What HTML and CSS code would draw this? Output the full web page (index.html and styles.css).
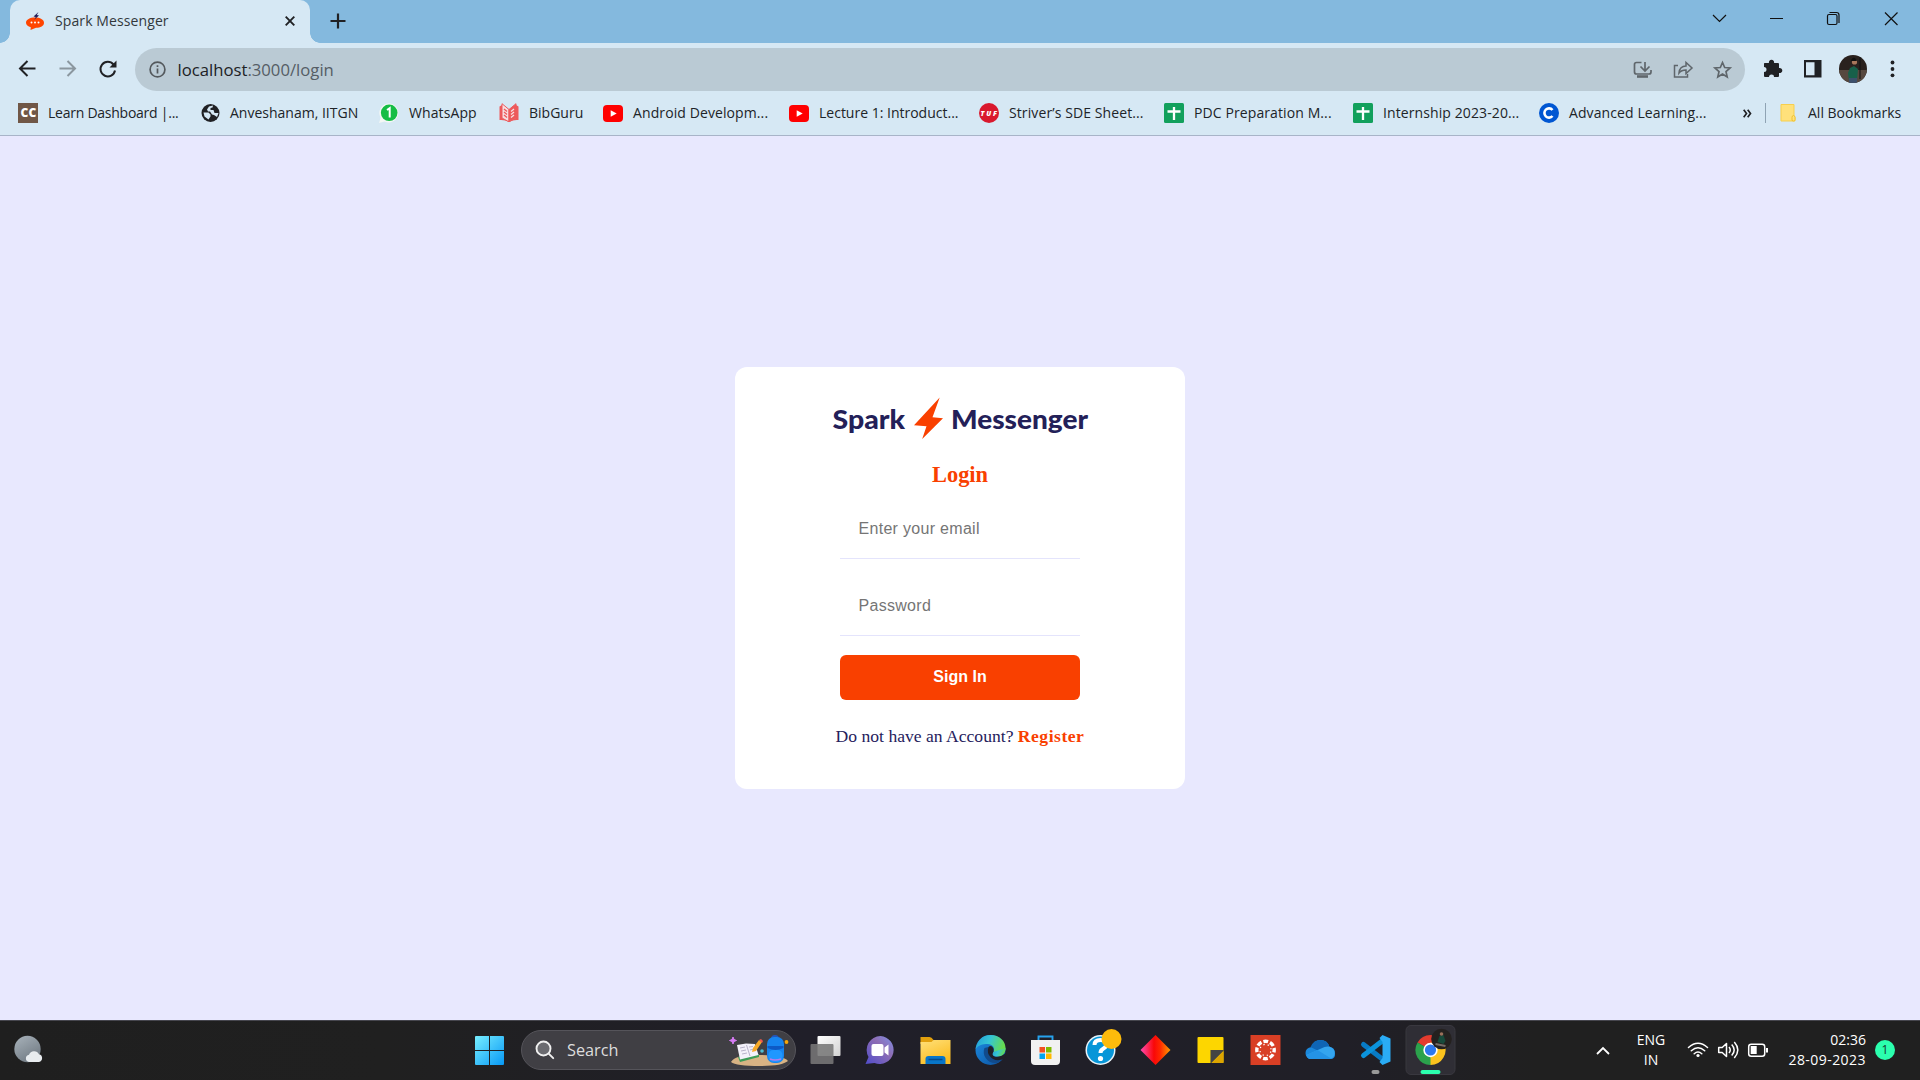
FILE: index.html
```html
<!DOCTYPE html>
<html lang="en">
<head>
<meta charset="utf-8">
<title>Spark Messenger</title>
<link rel="stylesheet" href="styles.css">
</head>
<body>
<header class="chrome">
  <div class="tabstrip">
    <div class="tab">
      <svg class="fav" width="18" height="18" viewBox="0 0 18 18"><path d="M9 5.500c5 0 9 2 9 5.200s-3.500 5-8 5.100L4.500 18l.3-2.800C2 14.500 0 12.900 0 10.700 0 7.500 4 5.500 9 5.500z" fill="#ff4500"/><path d="M12.500 0 7.500 4.400l2.300.6-1.600 2.700 4.800-4.200-2.200-.6z" fill="#25215c"/><g fill="#fff"><circle cx="5.500" cy="10.600" r="1"/><circle cx="9" cy="10.600" r="1"/><circle cx="12.500" cy="10.600" r="1"/></g></svg>
      <span class="tab-title">Spark Messenger</span>
      <svg class="tab-close" width="10" height="10" viewBox="0 0 10 10"><path d="M.7.700l8.600 8.600M9.300.700.700 9.300" stroke="#202124" stroke-width="1.900"/></svg>
    </div>
    <svg class="newtab" width="16" height="16" viewBox="0 0 16 16"><path d="M8 .5v15M.5 8h15" stroke="#202124" stroke-width="2.200"/></svg>
    <svg class="winbtns" width="220" height="43" viewBox="1700 0 220 43" fill="none" stroke="#111" stroke-width="1.200"><path d="M1713 15l6.500 6.500L1726 15M1770 18.500h13"/><rect x="1827.500" y="14.500" width="9.500" height="10" rx="1.500"/><path d="M1829.500 12.500h7q2.500 0 2.500 2.500v8"/><path d="M1885 12.500l12.500 12.500M1897.500 12.500 1885 25"/></svg>
  </div>
  <div class="toolbar">
    <svg class="nav" width="125" height="48" viewBox="0 43 125 48" fill="none" stroke="#202124" stroke-width="2"><path d="M35.500 68.500H20.500M27.500 61l-7.500 7.500 7.500 7.500"/><path d="M59.500 68.500h15M67.500 61l7.500 7.500-7.500 7.500" stroke="#8b979f"/><path d="M113.500 64.500A7.300 7.300 0 1 0 115 70.500"/><path d="M116.500 60.500v7h-7z" fill="#202124" stroke="none"/></svg>
    <div class="omnibox">
      <svg width="17" height="17" viewBox="0 0 17 17" fill="none" stroke="#54595d" stroke-width="1.700"><circle cx="8.500" cy="8.500" r="7.400"/><path d="M8.500 7.500v5M8.500 4.300v1.800"/></svg>
      <span class="url"><b>localhost</b>:3000/login</span>
      <svg class="omni-icons" width="112" height="43" viewBox="1630 48 112 43" fill="none" stroke="#5f666b" stroke-width="1.700"><path d="M1641.500 62.500h-5q-2 0-2 2v7.500q0 2 2 2h12.500q2 0 2-2v-2M1645 62v8M1640.500 66.500l4.500 4.500 4.500-4.500"/><path d="M1637 76.500h11" stroke-width="2.600"/><path d="M1678 65.500h-3.500V77h13v-3M1679 73c.5-5 3.500-7 7-7v-3.500l6 5.500-6 5.500V70c-3 0-5 .5-7 3z" stroke-width="1.500"/><path d="M1722.500 62.500l2.200 5 5.400.5-4.100 3.600 1.200 5.400-4.700-2.900-4.700 2.900 1.200-5.400-4.100-3.600 5.400-.5z"/></svg>
    </div>
    <svg class="actions" width="175" height="48" viewBox="1745 43 175 48"><path d="M1764.500 63h4.500a2.600 2.600 0 1 1 5 0h4q1 0 1 1v4a2.600 2.600 0 1 1 0 5v3q0 1-1 1h-4a2.500 2.500 0 1 0-5 0h-4q-1 0-1-1v-4a2.500 2.500 0 1 0 0-5v-3q0-1 .5-1z" fill="#202124"/><path d="M1804 60h17.500v17.500H1804zM1806 62.200v13.100h8.500V62.200z" fill="#202124" fill-rule="evenodd"/><clipPath id="av"><circle cx="1853" cy="69" r="14"/></clipPath><g clip-path="url(#av)"><path d="M1839 55h28v28h-28z" fill="#29211e"/><path d="M1839 70h28v13h-28z" fill="#56483f"/><path d="M1849 81l-1-8 2-5 4-2 4 3-1 11z" fill="#17604a"/><path d="M1849 78h8v5h-8z" fill="#3c506c"/><circle cx="1854.500" cy="62" r="2.600" fill="#a9775b"/><path d="M1851 61q1-4 4-3l2 3z" fill="#111"/><path d="M1860 57v22" stroke="#111"/></g><g fill="#202124"><circle cx="1892.500" cy="62.500" r="1.900"/><circle cx="1892.500" cy="69" r="1.900"/><circle cx="1892.500" cy="75.300" r="1.900"/></g></svg>
  </div>
  <nav class="bookmarks">
    <a class="bm w183 tight"><svg width="20" height="20" viewBox="0 0 20 20"><path d="M0 0h20v20H0z" fill="#705747"/><text x="2.500" y="13.500" class="cc" textLength="15.500">CC</text></svg><span>Learn Dashboard |...</span></a>
    <a class="bm w178"><svg width="19" height="20" viewBox="0 0 19 20"><circle cx="9.500" cy="10" r="9" fill="#202124"/><path d="M2.500 9.500h5l2 2v2l-2 3-4-3zM8 3.500l4-1-.5 2-2 .5v2h3l1 3h4l-1.500 4-3-2-2-.5-2-3H7l-1-2z" fill="#d6e8f4"/></svg><span>Anveshanam, IITGN</span></a>
    <a class="bm w120 loose"><svg width="20" height="20" viewBox="0 0 20 20"><path d="M10 .5a9.500 9.500 0 1 1-4.500 18L0 20l1.700-5.200A9.500 9.500 0 0 1 10 .5z" fill="#f4f7f5"/><circle cx="10.200" cy="9.800" r="8.300" fill="#15bd45"/><path d="M8 7l2.700-1.800v9.300" stroke="#fff" stroke-width="2" fill="none"/></svg><span>WhatsApp</span></a>
    <a class="bm w104"><svg width="20" height="20" viewBox="0 0 20 20" fill="none" stroke="#ed5a5c"><path d="M.5 3.500v13.500q5-.5 9.500 2 4.500-2.500 9.500-2V3.500L17 2v13l-7 3.500L3 15V2z" fill="#ed5a5c" stroke="none"/><path d="M3 .7v14.300l7 3.800V6.500z" fill="#f7dfe2"/><path d="M17 .7v14.300l-7 3.800V6.500z" fill="#ed5a5c"/><path d="M5 6l3 2.500M5 9l3 2.500M5 12l3 2.500" stroke-width="1.300"/><path d="M12 8.500 15 6M12 11.500 15 9M12 14.500l3-2.500" stroke="#f7dfe2" stroke-width="1.300"/></svg><span>BibGuru</span></a>
    <a class="bm w186 loose"><svg width="20" height="20" viewBox="0 0 20 20"><rect y="2" width="20" height="17" rx="4" fill="red"/><path d="M7.700 7.200v6.600l6-3.300z" fill="#fff"/></svg><span>Android Developm...</span></a>
    <a class="bm w190"><svg width="20" height="20" viewBox="0 0 20 20"><rect y="2" width="20" height="17" rx="4" fill="red"/><path d="M7.700 7.200v6.600l6-3.300z" fill="#fff"/></svg><span>Lecture 1: Introduct...</span></a>
    <a class="bm w185 loose"><svg width="20" height="20" viewBox="0 0 20 20"><circle cx="10" cy="10" r="10" fill="#d9182d"/><text x="1.500" y="12.500" class="tuf" textLength="16.500">TUF</text></svg><span>Striver’s SDE Sheet...</span></a>
    <a class="bm w189 loose"><svg width="20" height="20" viewBox="0 0 20 20"><rect width="20" height="20" rx="1.500" fill="#12a05c"/><path d="M10 4v13M3.500 8.500h13" stroke="#fff" stroke-width="2.300"/></svg><span>PDC Preparation M...</span></a>
    <a class="bm w186 loose"><svg width="20" height="20" viewBox="0 0 20 20"><rect width="20" height="20" rx="1.500" fill="#12a05c"/><path d="M10 4v13M3.500 8.500h13" stroke="#fff" stroke-width="2.300"/></svg><span>Internship 2023-20...</span></a>
    <a class="bm w203 loose"><svg width="20" height="20" viewBox="0 0 20 20"><circle cx="10" cy="10" r="10" fill="#0056d2"/><path d="M13.500 7A4.600 4.600 0 1 0 13.500 13" fill="none" stroke="#fff" stroke-width="2.600"/></svg><span>Advanced Learning...</span></a>
    <svg class="more" width="9" height="9" viewBox="0 0 9 9" fill="none" stroke="#202124" stroke-width="1.700"><path d="M.7.700 3.500 4.500.700 8.300M4.700.700 7.500 4.500 4.700 8.300"/></svg>
    <span class="sep"></span>
    <a class="bm all"><svg width="18" height="20" viewBox="0 0 18 20"><path d="M2 1.500h13v12l1 1v3.500H2z" fill="#ffe17b" stroke="#f7cf4d"/><path d="M13 17.500v-3q0-2 1.500-2t1.500 2v2q0 1.500-1.500 1.500z" fill="#ffe17b" stroke="#f0c22e"/></svg><span>All Bookmarks</span></a>
  </nav>
</header>

<main class="page">
  <section class="card">
    <svg class="logo" width="260" height="46" viewBox="830 395 260 46"><g class="logo-text"><text x="832.500" y="428.500" textLength="72.500" lengthAdjust="spacingAndGlyphs">Spark</text><text x="951" y="428.500" textLength="137" lengthAdjust="spacingAndGlyphs">Messenger</text></g><path d="M939.700 397.500 914 425.200 926.500 426.300 922.200 439 943 418.300 932.500 417.300z" fill="#f94000"/></svg>
    <h1 class="title">Login</h1>
    <form class="form">
      <input type="email" placeholder="Enter your email">
      <input type="password" placeholder="Password">
      <button type="button">Sign In</button>
    </form>
    <p class="foot">Do not have an Account? <a>Register</a></p>
  </section>
</main>

<footer class="taskbar">
  <svg class="weather" width="30" height="30" viewBox="0 0 30 30"><defs><linearGradient id="moon" x2=".6" y2="1"><stop stop-color="#a9b3bb"/><stop offset="1" stop-color="#727c85"/></linearGradient></defs><circle cx="13.500" cy="14" r="13.200" fill="url(#moon)"/><path d="M15 27a3.700 3.700 0 0 1 0-7.300 5.500 5.500 0 0 1 10-.5A4 4 0 0 1 25 27z" fill="#e8ecef"/></svg>
  <svg class="start" width="29" height="29" viewBox="0 0 29 29"><defs><linearGradient id="win" x2="1" y2="1"><stop stop-color="#77eeff"/><stop offset="1" stop-color="#0798f5"/></linearGradient></defs><path d="M1 0h13v14H0V1q0-1 1-1zM15 0h13q1 0 1 1v13H15zM0 15h14v14H1q-1 0-1-1zM15 15h14v13q0 1-1 1H15z" fill="url(#win)"/></svg>
  <div class="search">
    <svg width="20" height="20" viewBox="0 0 20 20" fill="#6b6b70" stroke="#f0f0f0" stroke-width="1.900"><circle cx="8.500" cy="8.500" r="7"/><path d="M13.700 13.700l4.500 4.500" stroke-linecap="round"/></svg>
    <span>Search</span>
    <svg class="art" width="62" height="34" viewBox="728 1034 62 34"><path d="M731 1063q4-8 30-7 22 0 27 6-6 5-28 5-24 0-29-4z" fill="#d8b384"/><path d="M733 1038l1 2.500 2.500 1-2.500 1-1 2.500-1-2.500-2.500-1 2.500-1z" fill="#d77cf5" stroke="#d77cf5"/><path d="M738 1058l2 5 19-5v-3z" fill="#3c9c56"/><path d="M737 1046l9-1.500 9 .5 3.500 11-18.500 4.500z" fill="#f3f1fa"/><path d="M740 1049l5-1M741 1052l5-1M742 1055l5-1M749 1048l4-.5M750 1051l4-1M746.500 1046l3.500 11" stroke="#aaa3be" stroke-width=".8"/><path d="M759 1041l3 2-6 9-4 1 1-4z" fill="#f7a928"/><path d="M759 1041l2-1 2 2-1 2z" fill="#f15b4e"/><circle cx="762" cy="1052" r="1.800" fill="#4fbfd2"/><circle cx="786.500" cy="1043" r="1.900" fill="#f8a705"/><path d="M772 1040q0-3 3-3t3 3" fill="none" stroke="#2257bd" stroke-width="2"/><rect x="767" y="1038" width="17" height="26" rx="7" fill="#1684ef"/><path d="M767.500 1049q8 4 16 0v-2h-16z" fill="#0d59c5"/><rect x="768.500" y="1051" width="14" height="12" rx="5" fill="#2097ff"/><path d="M770 1060q5 2 11 0" fill="none" stroke="#b57cee" stroke-width="1.600"/></svg>
  </div>
  <div class="apps">
    <svg viewBox="-27.500 -30 55 60"><defs><linearGradient id="tv" x2="1" y2="1"><stop stop-color="#fff"/><stop offset="1" stop-color="#d2d2d2"/></linearGradient></defs><rect x="-8" y="-14" width="23" height="20" rx="1" fill="url(#tv)"/><rect x="-15" y="-6" width="23" height="20" rx="1" fill="#777" opacity=".88"/></svg>
    <svg viewBox="-27.500 -30 55 60"><defs><linearGradient id="chat" x1="1" x2="0" y2="1"><stop stop-color="#7f92e8"/><stop offset=".4" stop-color="#8e6db4"/><stop offset="1" stop-color="#504ccb"/></linearGradient></defs><path d="M0-14a14 14 0 1 1-6 27l-9 1 3-7A14 14 0 0 1 0-14z" fill="url(#chat)"/><rect x="-9" y="-6" width="12" height="12" rx="2" fill="#fff"/><path d="M4-2.500l4-3v11l-4-3z" fill="#fff"/></svg>
    <svg viewBox="-27.500 -30 55 60"><defs><linearGradient id="fold" y2="1" x2=".5"><stop stop-color="#ffe07a"/><stop offset="1" stop-color="#fbbd22"/></linearGradient></defs><path d="M-15-13h9q2 0 4 3l1 4h-14z" fill="#e2a00d"/><path d="M-15-8h11l2-2h17v24h-30z" fill="url(#fold)"/><path d="M-10 14v-5q0-3 3-3H7q3 0 3 3v5z" fill="#0876c9"/><path d="M-7 9.500H7" stroke="#064b8b" stroke-width="1.500"/></svg>
    <svg viewBox="-27.500 -30 55 60"><defs><linearGradient id="ed1" x2="1" y2=".3"><stop stop-color="#229bd8"/><stop offset=".5" stop-color="#35c5d5"/><stop offset="1" stop-color="#66dc4e"/></linearGradient><linearGradient id="ed2" y2="1"><stop stop-color="#1d8ee4"/><stop offset="1" stop-color="#0b4f9d"/></linearGradient></defs><circle r="15" fill="url(#ed2)"/><path d="M-15-1C-13-10-8-15 0-15 9-15 15-9 15-2c0 5-4 8-8 8-5 0-6-2-4-4 2-4-1-8-6-8S-12-5-15-1z" fill="url(#ed1)"/><path d="M-6-2c-3 7 3 16 12 15 3-1 5-2 7-5Q7 11 3 8T-2-3z" fill="#114a8b"/><path d="M-2-3Q0-5 2-3t1 5q-2 3 1 4.500T16 3l-2 6Q4 12 0 7-4 3-2-3z" fill="#202028"/><path d="M3 2c-2 3 0 4.500 4 4.500 5 0 8-3 8-8.500z" fill="url(#ed1)"/></svg>
    <svg viewBox="-27.500 -30 55 60"><path d="M-7-8v-5.500H7V-8" fill="none" stroke="#26a2ed" stroke-width="1.900"/><path d="M-14.500-10h29V11q0 4-4 4h-21q-4 0-4-4z" fill="#f1f1f1"/><path d="M-6-3h5.500v5.500H-6z" fill="#f25022"/><path d="M.5-3H6v5.500H.500z" fill="#7fba00"/><path d="M-6 3.500h5.500V9H-6z" fill="#00a4ef"/><path d="M.5 3.500H6V9H.500z" fill="#ffb900"/></svg>
    <svg viewBox="-27.500 -30 55 60"><circle r="15" fill="#e9f4fa"/><circle r="13.500" fill="#0796d8"/><path d="M-6-5q0-5 6-5t6 4q0 3-3 4.500T0 3" fill="none" stroke="#fff" stroke-width="4"/><circle cy="8.500" r="2.600" fill="#fff"/><circle cx="11" cy="-11" r="10" fill="#fdbb0b"/></svg>
    <svg viewBox="-27.500 -30 55 60"><defs><linearGradient id="dia"><stop stop-color="#ff4cb5"/><stop offset=".45" stop-color="#f90808"/><stop offset=".65" stop-color="#ff2600"/><stop offset="1" stop-color="#ff9e00"/></linearGradient></defs><path d="M0-15 15 0 0 15-15 0z" fill="url(#dia)"/></svg>
    <svg viewBox="-27.500 -30 55 60"><rect x="-13" y="-13" width="26" height="26" rx="1" fill="#fdd600"/><path d="M0 0h13v1L1 13H0z" fill="#444"/><path d="M13 1v12H1z" fill="#dda500"/></svg>
    <svg viewBox="-27.500 -30 55 60"><path d="M-15-15h30v30h-30z" fill="#d93f25"/><circle r="8.700" fill="none" stroke="#fff" stroke-width="3.400" stroke-dasharray="4.800 2.033" stroke-dashoffset="2.400"/><circle r="5.600" fill="none" stroke="#fff" stroke-width="1.300" stroke-dasharray="1.300 3.098" stroke-dashoffset="-1.550"/></svg>
    <svg viewBox="-27.500 -30 55 60"><path d="M-10 9q-5-1-5-6t6-6q2-7 9-7t9 7q5 0 5.500 6T10 9z" fill="#1b88dc"/><path d="M-10-3q3-7 10-7t9 7L2 3z" fill="#0f65b5"/><path d="M-14 5 4-3q7-2 10 4 1 6-4 8h-20q-3 0-4-4z" fill="#34a5ef"/><path d="M-14 5-3 0 11 8.700q-1 .3-2 .3h-19q-3 0-4-4z" fill="#2493e6"/></svg>
    <svg viewBox="-27.500 -30 55 60"><path d="M-12-5.500 8 10" stroke="#087bc5" stroke-width="5" stroke-linecap="round"/><path d="M-12 5.500 8-10" stroke="#0b93dc" stroke-width="5" stroke-linecap="round"/><path d="M7-15l8 3.500v23L7 15 4 12 7 8V-8l-3-4z" fill="#2aacf5"/><rect x="-4" y="20" width="8" height="4" rx="2" fill="#999"/></svg>
    <svg viewBox="-27.500 -30 55 60"><rect x="-24.500" y="-24.500" width="49" height="49" rx="5" fill="#2f2e35" stroke="#39383f"/><path d="M0 0-13-7.500A15 15 0 0 1 13-7.500z" fill="#e33b2e"/><path d="M0 0-13-7.500A15 15 0 0 0 0 15L6.500 4z" fill="#2ba24c"/><path d="M0 0 0 15A15 15 0 0 0 13-7.500H0L6.500 4z" fill="#fcc31e"/><circle r="7.200" fill="#fff"/><circle r="5.600" fill="#2d78ee"/><circle cx="11" cy="-11" r="10.300" fill="#24211f"/><path d="M7-8l2-6 4-1 2 6-2 3z" fill="#174a3b"/><circle cx="11" cy="-16" r="1.800" fill="#9a705b"/><path d="M5-6l10 2" stroke="#766d66" stroke-width="2"/><rect x="-10" y="20" width="20" height="4" rx="2" fill="#2bffae"/></svg>
  </div>
  <div class="tray">
    <svg class="chev" width="14" height="9" viewBox="0 0 14 9"><path d="M1 8l6-6 6 6" fill="none" stroke="#fff" stroke-width="1.800"/></svg>
    <div class="lang">ENG<br>IN</div>
    <svg class="status" width="82" height="24" viewBox="1687 1038 82 24" fill="none" stroke="#fff" stroke-width="1.500"><path d="M1688.500 1047.500q9.500-8.500 19 0M1691.300 1050.700q6.700-6 13.400 0M1694.200 1053.700q3.800-3.400 7.600 0" stroke-linecap="round"/><circle cx="1698" cy="1055.500" r="1.600" fill="#fff" stroke="none"/><path d="M1718.700 1047.500h3.500l4.300-4v13l-4.300-4h-3.500z" stroke-linejoin="round"/><path d="M1729 1047q2.500 3 0 6M1731.700 1044.500q5 5.500 0 11M1734.300 1042q7 8 0 16"/><rect x="1748.700" y="1044.200" width="16" height="12" rx="2.500"/><path d="M1750.700 1046h6v8h-6z" fill="#fff" stroke="none"/><path d="M1767 1048v4.500" stroke-width="2"/></svg>
    <div class="clock">02:36<br><span class="date">28-09-2023</span></div>
    <span class="badge">1</span>
  </div>
</footer>
</body>
</html>
```
FILE: styles.css
```css
* { box-sizing: border-box; }
body {
  margin: 0;
  width: 1920px;
  height: 1080px;
  overflow: hidden;
  display: flex;
  flex-direction: column;
  background: #e8e8fe;
  font-family: "Open Sans", "Noto Sans", sans-serif;
}
svg { display: block; flex: none; }

.chrome { height: 136px; background: #d6e8f4; border-bottom: 1px solid #a8b4c8; flex: none; }
.tabstrip {
  height: 43px;
  display: flex;
  align-items: flex-start;
  background: #84b9de;
}
.tab {
  width: 300px;
  height: 43px;
  margin-left: 10px;
  padding: 0 15px 1px 16px;
  display: flex;
  align-items: center;
  background: #d6e8f4;
  border-radius: 10px 10px 0 0;
  position: relative;
}
.tab::before, .tab::after {
  content: "";
  position: absolute;
  bottom: 0;
  width: 10px;
  height: 10px;
}
.tab::before { left: -10px; background: radial-gradient(circle at 0 0, transparent 9.500px, #d6e8f4 10px); }
.tab::after { right: -10px; background: radial-gradient(circle at 100% 0, transparent 9.500px, #d6e8f4 10px); }
.tab-title { margin-left: 11px; padding-bottom: 2px; font-size: 14px; color: #33383c; flex: 1; letter-spacing: .1px; }
.newtab { margin: 13px 0 0 19.500px; }
.winbtns { margin-left: auto; }

.toolbar { height: 48px; display: flex; align-items: center; }
.nav { margin-right: 10px; }
.omnibox {
  width: 1610px;
  height: 43px;
  margin-top: 5px;
  border-radius: 22px;
  background: #bacad4;
  display: flex;
  align-items: center;
  padding: 0 3px 0 14px;
}
.url { margin-left: 11.500px; font-size: 16.700px; color: #555d65; flex: 1; }
.url b { font-weight: 400; color: #202124; }

.bookmarks { height: 44px; display: flex; align-items: center; padding-left: 18px; }
.bm {
  display: flex;
  align-items: center;
  gap: 10px;
  font-size: 14px;
  color: #202428;
  white-space: nowrap;
  flex: none;
}
.bm span { padding-bottom: 2px; }
.loose { letter-spacing: .1px; }
.tight { letter-spacing: -.25px; }
.all { gap: 11px; }
.w183 { width: 183px; }
.w178 { width: 178px; }
.w120 { width: 120px; }
.w104 { width: 104px; }
.w186 { width: 186px; }
.w190 { width: 190px; }
.w185 { width: 185px; }
.w189 { width: 189px; }
.w203 { width: 203px; }
.cc { font: 800 12px "Open Sans", sans-serif; fill: #fff; }
.tuf { font: italic 800 7px "Open Sans", sans-serif; fill: #fff; }
.more { margin: 0 13px 0 1px; }
.sep { width: 1px; height: 20px; background: #8fa3b3; margin-right: 13px; }

.page { flex: 1; display: flex; align-items: center; justify-content: center; }
.card {
  width: 450px;
  height: 422px;
  border-radius: 12px;
  background: #fff;
  display: flex;
  flex-direction: column;
  align-items: center;
  padding-top: 28px;
  font-family: "Liberation Serif", serif;
}
.logo-text text { font: 900 26px Lato, sans-serif; fill: #232058; }
.title { margin: 21px 0 0; font-size: 22.400px; line-height: 26px; font-weight: 700; color: #f94000; }
.form { display: flex; flex-direction: column; width: 240px; margin-top: 9px; }
.form input {
  height: 62px;
  padding: 2px 0 0 18.500px;
  margin-bottom: 15px;
  border: 0;
  border-bottom: 1px solid #e4e4fc;
  font: 16px "Liberation Sans", sans-serif;
  letter-spacing: .3px;
  background: none;
}
.form input::placeholder { color: #757575; opacity: 1; }
.form button {
  height: 45px;
  padding: 0 0 2px;
  margin-top: 4px;
  border: 0;
  border-radius: 6px;
  background: #f94000;
  color: #fff;
  font: bold 16px "Liberation Sans", sans-serif;
}
.foot { margin: 26px 0 0; font-size: 17.600px; line-height: 20px; color: #25215c; }
.foot a { font-weight: 700; letter-spacing: .5px; color: #f94000; }

.taskbar {
  height: 60px;
  flex: none;
  box-shadow: inset 0 1px #46464e;
  background: linear-gradient(90deg, #1f1f1f, #202020 20%, #201f29 42%, #201f27 70%, #202020 80%);
  display: flex;
  align-items: center;
  color: #fff;
}
.weather { margin-left: 14px; }
.start { margin-left: 431px; }
.search {
  width: 275px;
  height: 40px;
  margin-left: 17px;
  padding: 0 5px 0 13px;
  display: flex;
  align-items: center;
  background: #403f44;
  border: 1px solid #55545a;
  border-radius: 20px;
  font-size: 16.300px;
  color: #ddd;
}
.search span { margin-left: 12px; flex: 1; }
.apps { display: flex; margin-left: 2px; }
.apps svg { width: 55px; height: 60px; }
.tray { display: flex; align-items: center; margin-left: auto; margin-right: 25px; height: 60px; }
.lang, .clock { font-size: 14px; line-height: 20px; }
.lang { width: 36px; text-align: center; margin: 0 18px 0 23px; }
.clock { width: 97px; text-align: right; }
.date { letter-spacing: .45px; }
.badge {
  width: 20px;
  height: 20px;
  margin-left: 9px;
  border-radius: 50%;
  background: #2bffae;
  color: #16382c;
  font-size: 12px;
  line-height: 20px;
  text-align: center;
}
```
